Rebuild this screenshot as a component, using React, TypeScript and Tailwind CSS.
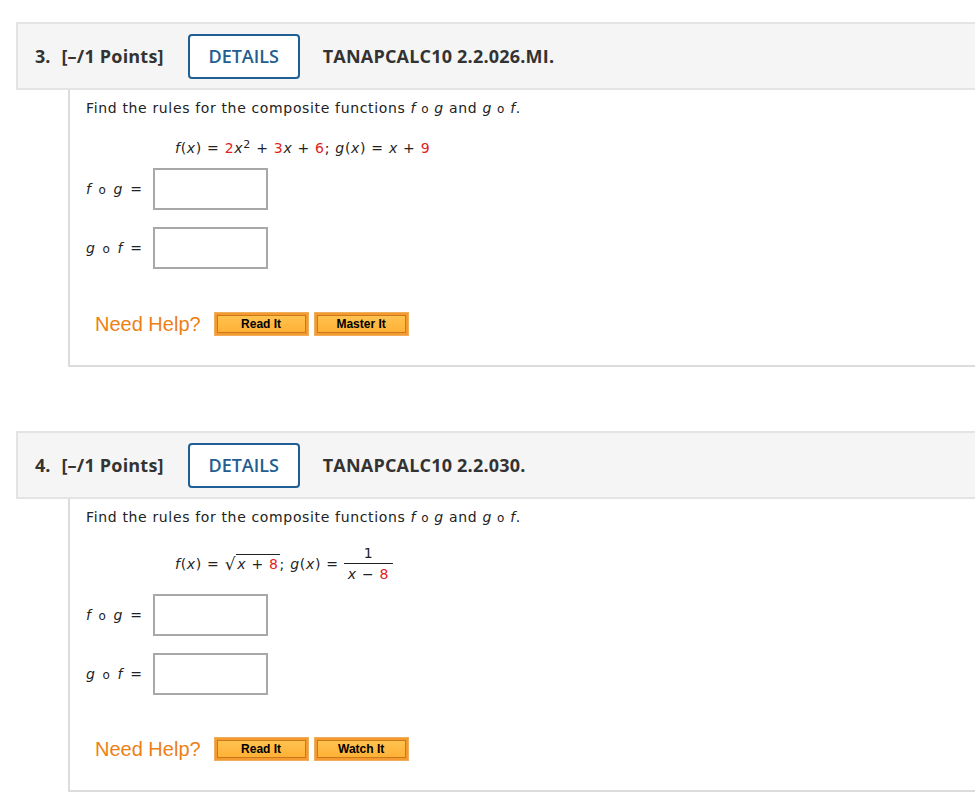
import React from "react";

const Red: React.FC<{ children: React.ReactNode }> = ({ children }) => (
  <span className="text-[#e3211c]">{children}</span>
);

const Comp: React.FC<{ a: string; b: string }> = ({ a, b }) => (
  <span>
    <i>{a}</i> <span className="text-[12px]">o</span> <i>{b}</i>
  </span>
);

const Header: React.FC<{ num: number; code: string }> = ({ num, code }) => (
  <div className="flex items-center h-[68px] bg-[#f5f5f5] border-y-2 border-l-2 border-[#e4e4e4] pl-[17px] text-[#333] font-['Open_Sans','Noto_Sans',sans-serif]">
    <span className="text-[18px] font-bold">{num}.</span>
    <span className="ml-[11px] text-[18px] font-bold tracking-[0.2px]">[–/1 Points]</span>
    <div className="ml-[24px] w-[112px] h-[45px] flex items-center justify-center border-2 border-[#1f5f94] rounded-[4px] bg-white text-[#245d8f] text-[18px] font-semibold">
      DETAILS
    </div>
    <span className="ml-[23px] text-[18px] font-bold tracking-[0.2px]">{code}</span>
  </div>
);

const AnswerRow: React.FC<{ a: string; b: string; className?: string }> = ({ a, b, className }) => (
  <div className={"flex items-center " + (className ?? "")}>
    <div className="w-[67px] text-[14px] tracking-[1.6px]">
      <Comp a={a} b={b} /> =
    </div>
    <div className="w-[115px] h-[42px] border-2 border-[#a8a8a8] bg-white" />
  </div>
);

const HelpBtn: React.FC<{ label: string }> = ({ label }) => (
  <div className="w-[95px] h-[24px] border border-[#eeae5e] bg-[#f59a2e] p-[2px]">
    <div className="h-full flex items-center justify-center border border-[#c9781c] bg-gradient-to-b from-[#ffc24f] to-[#ffb136] text-[12px] font-bold text-black font-['Liberation_Sans',Arial,sans-serif]">
      {label}
    </div>
  </div>
);

const Help: React.FC<{ second: string; className?: string }> = ({ second, className }) => (
  <div className={"flex items-center pl-[9px] " + (className ?? "")}>
    <span className="text-[20px] text-[#ec7f16] mr-[13px] font-['Liberation_Sans',Arial,sans-serif]">
      Need Help?
    </span>
    <HelpBtn label="Read It" />
    <div className="w-[5px]" />
    <HelpBtn label={second} />
  </div>
);

const Prompt: React.FC = () => (
  <div className="text-[14px] leading-[20px] tracking-[0.65px]">
    Find the rules for the composite functions <Comp a="f" b="g" /> and <Comp a="g" b="f" />.
  </div>
);

const App: React.FC = () => {
  return (
    <div className="min-h-screen bg-white pt-[22px] overflow-hidden text-[#222] font-['DejaVu_Sans',Verdana,sans-serif]">
      {/* question 3 */}
      <div className="ml-[16px]">
        <Header num={3} code="TANAPCALC10 2.2.026.MI." />
        <div className="ml-[52px] border-l-2 border-b-2 border-[#dcdcdc] pl-[16px] pt-[8px] pb-[26px]">
          <Prompt />
          <div className="mt-[19px] ml-[89px] text-[14px] leading-[20px] tracking-[0.7px]">
            <i>f</i>(<i>x</i>) = <Red>2</Red><i>x</i>
            <sup className="text-[11px]">2</sup> + <Red>3</Red><i>x</i> + <Red>6</Red>; <i>g</i>(<i>x</i>) = <i>x</i> + <Red>9</Red>
          </div>
          <AnswerRow a="f" b="g" className="mt-[10px]" />
          <AnswerRow a="g" b="f" className="mt-[17px]" />
          <Help second="Master It" className="mt-[40px]" />
        </div>
      </div>

      {/* question 4 */}
      <div className="ml-[16px] mt-[64px]">
        <Header num={4} code="TANAPCALC10 2.2.030." />
        <div className="ml-[52px] border-l-2 border-b-2 border-[#dcdcdc] pl-[16px] pt-[8px] pb-[26px]">
          <Prompt />
          <div className="mt-[15px] ml-[89px] flex items-center text-[14px] leading-[20px] tracking-[0.7px]">
            <span>
              <i>f</i>(<i>x</i>) =&nbsp;
            </span>
            <span className="text-[17px]">√</span>
            <span className="border-t border-[#222] leading-[18px] px-[1px]">
              <i>x</i> + <Red>8</Red>
            </span>
            <span>
              ; <i>g</i>(<i>x</i>) =&nbsp;
            </span>
            <span className="inline-flex flex-col items-center">
              <span className="px-[4px] border-b border-[#222] leading-[20px]">&nbsp;&nbsp;&nbsp;1&nbsp;&nbsp;&nbsp;</span>
              <span className="px-[4px] leading-[20px]">
                <i>x</i> − <Red>8</Red>
              </span>
            </span>
          </div>
          <AnswerRow a="f" b="g" className="mt-[10px]" />
          <AnswerRow a="g" b="f" className="mt-[17px]" />
          <Help second="Watch It" className="mt-[39px]" />
        </div>
      </div>
    </div>
  );
};

export default App;
